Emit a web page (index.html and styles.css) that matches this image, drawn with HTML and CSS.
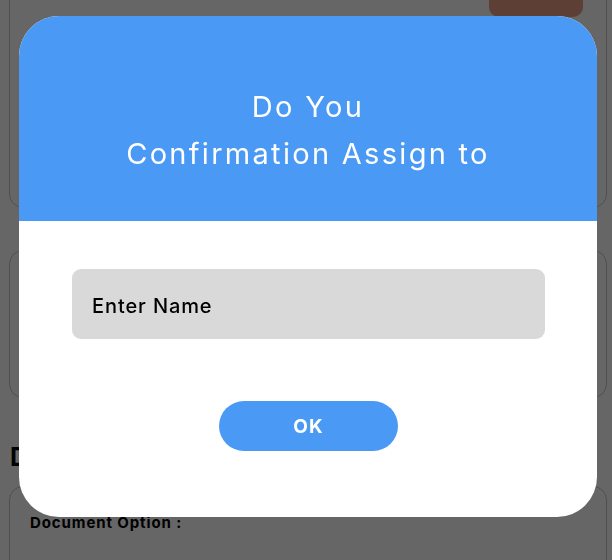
FILE: index.html
```html
<!DOCTYPE html>
<html>
<head>
<meta charset="utf-8">
<link rel="stylesheet" href="styles.css">
</head>
<body>
<div class="page">
  <div class="card card-top">
    <div class="card-head">
      <span class="label">Status :</span>
      <span class="pill-btn"></span>
    </div>
  </div>
  <div class="card card-mid"></div>
  <h2 class="section-title">Documents</h2>
  <div class="card card-doc">
    <span class="label">Document Option :</span>
  </div>
</div>

<div class="overlay">
  <div class="modal">
    <div class="modal-header">
      <p class="modal-title">Do You<br>Confirmation Assign to</p>
    </div>
    <div class="modal-body">
      <div class="name-field">Enter Name</div>
      <button class="ok-btn">OK</button>
    </div>
  </div>
</div>
</body>
</html>
```

FILE: styles.css
```css
* { box-sizing: border-box; }
html, body {
  margin: 0;
  padding: 0;
  background: #ffffff;
  overflow: hidden;
  height: 100%;
}
body {
  font-family: "Inter", "Noto Sans", sans-serif;
  color: #000;
}
.page {
  padding: 0 5px 0 9px;
}
.card {
  border: 1px solid #c4c4c4;
  border-radius: 14px;
  background: #fff;
}
.card-top {
  margin-top: -40px;
  height: 248px;
}
.card-head {
  display: flex;
  justify-content: space-between;
  align-items: flex-start;
  padding: 16px 23px 0 27px;
}
.label {
  font-weight: 700;
  font-size: 15px;
  letter-spacing: 0.9px;
}
.card-head .label {
  margin-top: 52px;
}
.pill-btn {
  display: block;
  width: 94px;
  height: 40px;
  border-radius: 10px;
  background: #ec9e84;
}
.card-mid {
  margin-top: 42px;
  height: 148px;
}
.section-title {
  margin: 44px 0 0 1px;
  font-size: 25px;
  line-height: 30px;
  font-weight: 700;
}
.card-doc {
  margin-top: 14px;
  height: 120px;
  padding: 25px 20px;
}

.overlay {
  position: fixed;
  inset: 0;
  background: rgba(0, 0, 0, 0.6);
  padding: 16px 0 0 19px;
}
.modal {
  width: 578px;
  height: 501px;
  background: #fff;
  border-radius: 40px;
  overflow: hidden;
  display: flex;
  flex-direction: column;
}
.modal-header {
  height: 205px;
  background: #4a99f4;
  display: flex;
  align-items: center;
  justify-content: center;
  padding-top: 22px;
}
.modal-title {
  margin: 0;
  color: #fff;
  text-align: center;
  font-size: 29px;
  line-height: 47px;
  font-weight: 400;
  letter-spacing: 2.3px;
}
.modal-body {
  display: flex;
  flex-direction: column;
  align-items: center;
  padding: 48px 52px 0 53px;
}
.name-field {
  width: 100%;
  height: 70px;
  background: #d9d9d9;
  border-radius: 9px;
  display: flex;
  align-items: center;
  padding: 3px 0 0 20px;
  font-size: 20px;
  font-weight: 500;
  letter-spacing: 0.9px;
  color: #000;
}
.ok-btn {
  margin-top: 62px;
  width: 179px;
  height: 50px;
  border: none;
  border-radius: 25px;
  background: #4a99f4;
  color: #fff;
  font-family: inherit;
  font-size: 19px;
  font-weight: 700;
  letter-spacing: 1px;
}
```
